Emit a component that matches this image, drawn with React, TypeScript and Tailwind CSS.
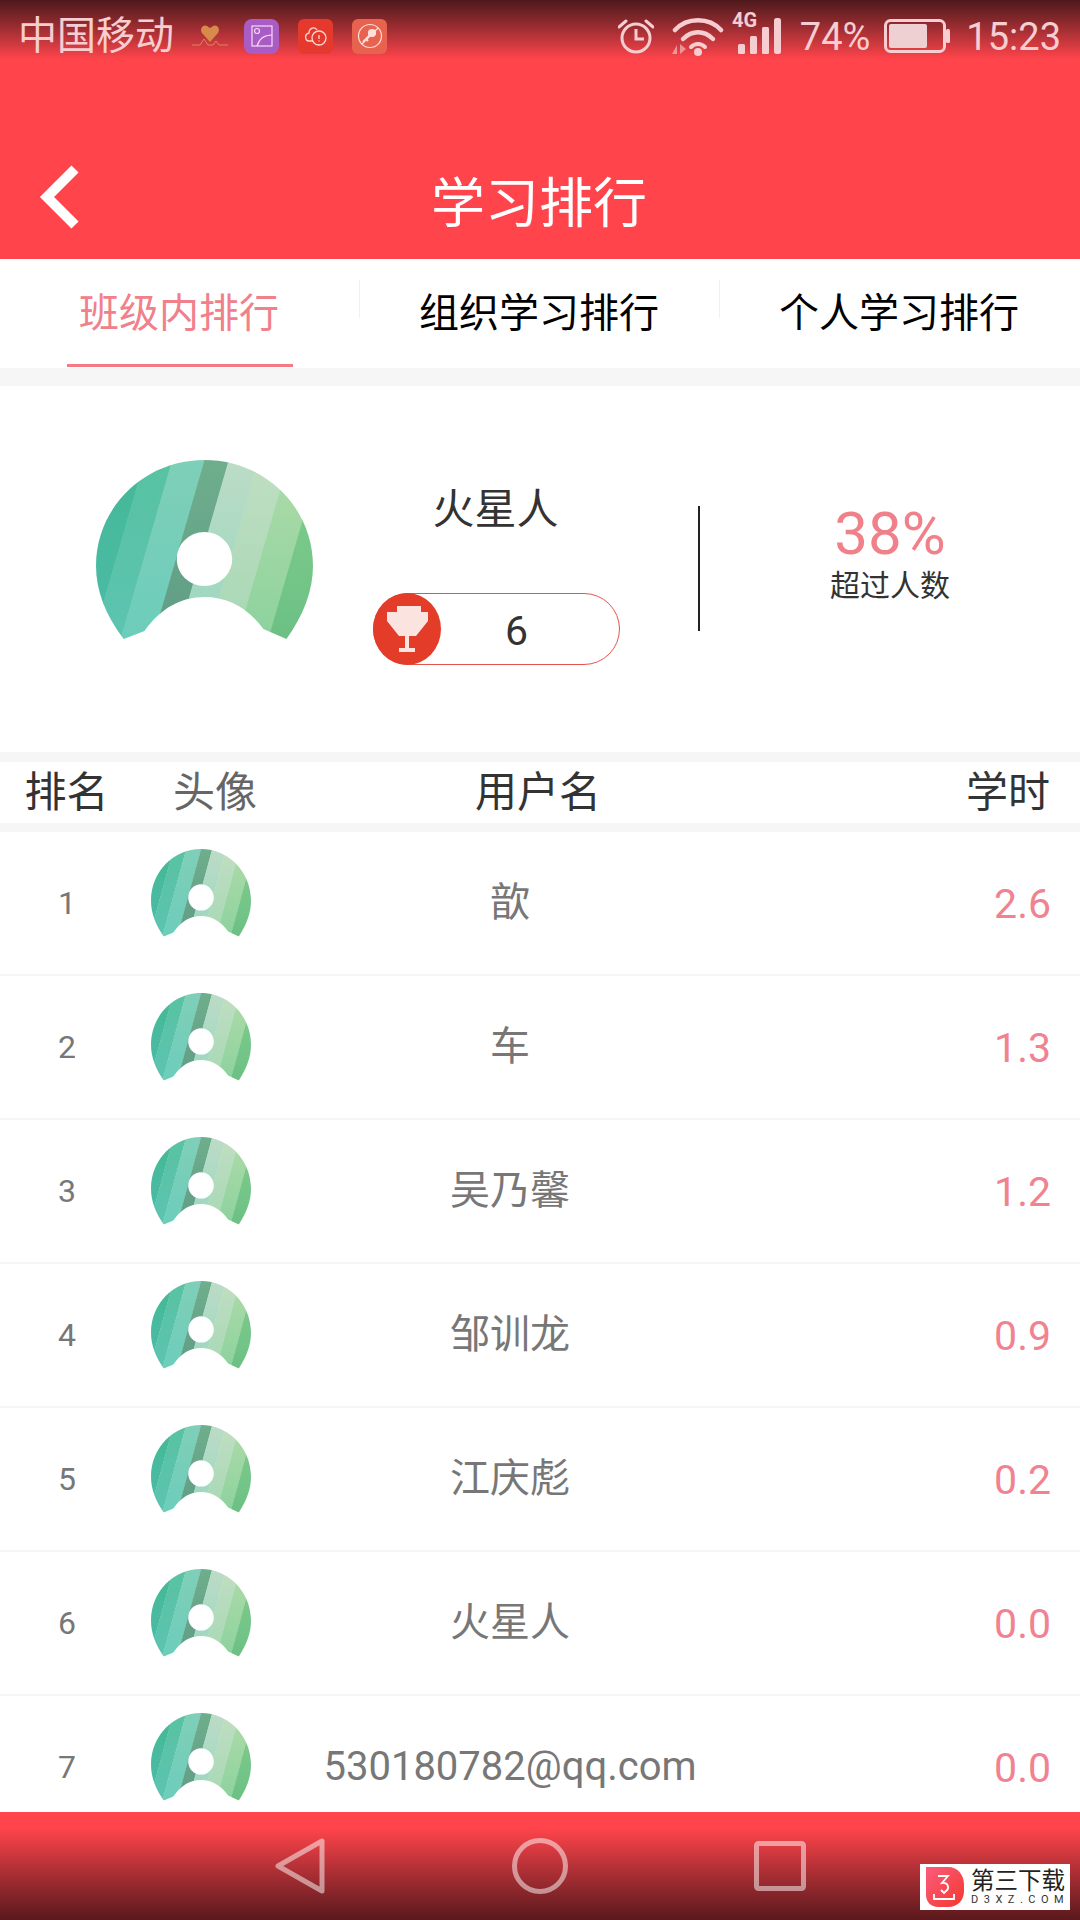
import { useId } from 'react'

const rows = [
  { rank: 1, name: '歆', hours: '2.6' },
  { rank: 2, name: '车', hours: '1.3' },
  { rank: 3, name: '吴乃馨', hours: '1.2' },
  { rank: 4, name: '邹训龙', hours: '0.9' },
  { rank: 5, name: '江庆彪', hours: '0.2' },
  { rank: 6, name: '火星人', hours: '0.0' },
  { rank: 7, name: '530180782@qq.com', hours: '0.0' },
]

const bands = [
  { from: -60, to: 42, top: '#45b896', bottom: '#4cbca8' },
  { from: 42, to: 66, top: '#58c2a2', bottom: '#5cc4b0' },
  { from: 66, to: 94, top: '#7fcfb8', bottom: '#6ccdbb' },
  { from: 94, to: 115, top: '#6fae8c', bottom: '#5f9c86' },
  { from: 115, to: 141, top: '#bcdcc6', bottom: '#98d6c0' },
  { from: 141, to: 167, top: '#c0dec2', bottom: '#a6d8b4' },
  { from: 167, to: 194, top: '#aedba8', bottom: '#8cd29e' },
  { from: 194, to: 300, top: '#82ce8e', bottom: '#6cc084' },
]

function Avatar({ className }: { className: string }) {
  const id = useId()
  return (
    <svg viewBox="0 0 188 180" preserveAspectRatio="none" className={className}>
      <defs>
        <clipPath id={id}>
          <path
            clipRule="evenodd"
            d="M24 179C8 155 0 130 0 106C0 47 42 0 94 0C146 0 188 47 188 106C188 130 180 155 165 179L145 169C132 148 114 137 94 137C74 137 56 148 42 171ZM94 72C81 72 70 84 70 99C70 114 81 126 94 126C107 126 118 114 118 99C118 84 107 72 94 72Z"
          />
        </clipPath>
        {bands.map((b, i) => (
          <linearGradient key={i} id={`${id}-${i}`} x1="0" y1="0" x2="0" y2="1">
            <stop offset="0" stopColor={b.top} />
            <stop offset="1" stopColor={b.bottom} />
          </linearGradient>
        ))}
      </defs>
      <g clipPath={`url(#${id})`}>
        {bands.map((b, i) => (
          <polygon
            key={i}
            fill={`url(#${id}-${i})`}
            points={`${b.from},0 ${b.to + 0.5},0 ${b.to + 0.5 - 45},180 ${b.from - 45},180`}
          />
        ))}
      </g>
    </svg>
  )
}

function StatusIcons() {
  return (
    <div className="ml-auto flex items-center text-[38px] leading-none text-[#f6cdd0]">
      <svg viewBox="0 0 36 38" className="h-[38px] w-[36px]" fill="none" stroke="currentColor" strokeWidth="3">
        <circle cx="18" cy="21" r="14" />
        <path d="M18 12V22H26" />
        <path d="M1 10L8 4M35 10L28 4" strokeLinecap="round" />
      </svg>
      <svg viewBox="0 0 52 40" className="ml-[18px] h-[40px] w-[52px]" fill="none" stroke="currentColor" strokeLinecap="round">
        <path d="M3 14C15 1 37 1 49 14" strokeWidth="4.5" />
        <path d="M11 23C20 14 32 14 41 23" strokeWidth="4.5" />
        <path d="M19 31C23 27 29 27 33 31" strokeWidth="4" />
        <circle cx="26" cy="36" r="4" fill="currentColor" stroke="none" />
        <path d="M0 38L5 29V38ZM8 28L14 33L8 38Z" fill="currentColor" fillOpacity="0.6" stroke="none" />
      </svg>
      <svg viewBox="0 0 50 44" className="ml-[8px] h-[44px] w-[50px] overflow-visible" fill="currentColor">
        <text x="0" y="13" fontSize="20" fontWeight="700" fontFamily="Roboto, sans-serif">4G</text>
        <rect x="6" y="30" width="7" height="10" rx="1.5" />
        <rect x="18" y="22" width="7" height="18" rx="1.5" />
        <rect x="30" y="13" width="7" height="27" rx="1.5" />
        <rect x="42" y="4" width="7" height="36" rx="2.5" />
      </svg>
      <span className="ml-[18px] mt-[2px]">74%</span>
      <svg viewBox="0 0 66 34" className="ml-[14px] h-[34px] w-[66px]">
        <rect x="1.5" y="1.5" width="59" height="31" rx="5" fill="none" stroke="currentColor" strokeWidth="3" />
        <rect x="5" y="5" width="38" height="24" rx="2" fill="#eecfd2" />
        <rect x="62" y="10" width="4" height="14" rx="1.5" fill="currentColor" />
      </svg>
      <span className="ml-[16px] mr-[19px] mt-[2px]">15:23</span>
    </div>
  )
}

function StatusBar() {
  return (
    <div className="flex h-[72px] items-center bg-linear-to-b from-[#4e191c] to-[#ff444b] to-[82%]">
      <span className="ml-[18px] text-[39px] leading-none text-[#f6cdd0]">中国移动</span>
      <svg viewBox="0 0 36 24" className="ml-[18px] h-[24px] w-[36px]" fill="none">
        <path d="M0 21H8L12 15L16 21H21L24 17L27 21H36" stroke="#d99a6a" strokeWidth="0.8" />
        <path d="M18 18L10 9C7 4 12 0 15 2C16.500 3 18 4 18 4C18 4 20 3 21 2C24 0 29 4 26 9Z" fill="#d88a4c" />
      </svg>
      <div className="ml-[16px] flex h-[35px] w-[35px] items-center justify-center rounded-[8px] bg-[#a85cc4]">
        <svg viewBox="0 0 22 22" className="h-[22px] w-[22px]" fill="none" stroke="#f9d9fb" strokeWidth="1.200">
          <rect x="1" y="1" width="20" height="20" />
          <circle cx="6" cy="6" r="2.500" />
          <path d="M6 21C8 14 13 10 21 10" />
        </svg>
      </div>
      <div className="ml-[19px] flex h-[35px] w-[35px] items-center justify-center rounded-[6px] bg-[#e6392d]">
        <svg viewBox="0 0 24 22" className="h-[22px] w-[24px]" fill="none" stroke="#fbd7d2" strokeWidth="1.300">
          <path d="M9 16H5C1 16 0 9 5 8C5 3 11 1 13 5" />
          <circle cx="15" cy="13" r="7" />
          <path d="M15 10V14M15 15.500V16.500" />
        </svg>
      </div>
      <div className="ml-[19px] flex h-[35px] w-[35px] items-center justify-center rounded-[6px] bg-[#e8634f]">
        <svg viewBox="0 0 26 26" className="h-[26px] w-[26px]" fill="none" stroke="#fde0da" strokeWidth="1.200">
          <circle cx="13" cy="13" r="11.500" />
          <circle cx="15" cy="10" r="3.500" fill="#fde0da" />
          <path d="M13 12L6 19M9 16L11 18" strokeWidth="2" />
          <path d="M21 5L5 21" />
        </svg>
      </div>
      <StatusIcons />
    </div>
  )
}

function Tabs() {
  const tabs = ['班级内排行', '组织学习排行', '个人学习排行']
  return (
    <div className="flex h-[109px] items-center bg-white">
      {tabs.map((tab, i) => (
        <div key={tab} className="relative flex h-full flex-1 items-center justify-center pr-[2px]">
          <span className={`text-[40px] leading-none ${i === 0 ? 'text-[#f0808a]' : 'text-black'}`}>{tab}</span>
          {i === 0 && <div className="absolute bottom-px left-[67px] h-[3px] w-[226px] bg-[#f57a84]" />}
          {i < 2 && <div className="absolute right-0 top-[21px] h-[38px] w-px bg-[#f0f0f0]" />}
        </div>
      ))}
    </div>
  )
}

function Profile() {
  return (
    <section className="flex h-[366px] items-start bg-white">
      <Avatar className="ml-[96px] mt-[74px] h-[180px] w-[217px]" />
      <div className="ml-[60px] mt-[96px] flex w-[247px] flex-col items-center">
        <span className="pr-[2px] text-[42px] leading-[56px] text-[#333]">火星人</span>
        <div className="mt-[55px] flex h-[72px] w-full items-center rounded-full border-[1.5px] border-[#e2554c]">
          <svg viewBox="0 0 68 72" className="-ml-px h-[72px] w-[68px] shrink-0">
            <ellipse cx="34" cy="36" rx="34" ry="36" fill="#e33c29" />
            <path d="M24 13H48V19H55V28L43 43H36V55H42V59H26V55H32V43H26L14 28V19H24Z" fill="#fbe4df" />
          </svg>
          <span className="ml-[64px] mt-[4px] text-[41px] leading-none text-[#333]">6</span>
        </div>
      </div>
      <div className="ml-[78px] mt-[120px] h-[125px] w-[2px] bg-[#222]" />
      <div className="mt-[116px] flex flex-1 flex-col items-center">
        <span className="text-[60px] leading-[64px] text-[#f0808a]">38%</span>
        <span className="text-[30px] leading-[40px] text-[#333]">超过人数</span>
      </div>
    </section>
  )
}

function RankRow({ rank, name, hours }: { rank: number; name: string; hours: string }) {
  return (
    <div className="flex h-[144px] shrink-0 items-center border-b-2 border-[#f6f6f6] bg-white">
      <span className="w-[132px] pl-[2px] text-center text-[32px] text-[#777]">{rank}</span>
      <Avatar className="mb-[20px] ml-[19px] h-[88px] w-[100px]" />
      <span className="w-[518px] text-center text-[40px] text-[#777]">{name}</span>
      <span className="flex-1 pr-[29px] pt-[4px] text-right text-[41px] text-[#f0838f]">{hours}</span>
    </div>
  )
}

function NavBar() {
  return (
    <div className="flex h-[108px] shrink-0 items-start bg-linear-to-b from-[#ff444b] from-[15%] to-[#5a191d]">
      <svg viewBox="0 0 50 56" className="ml-[275px] mt-[26px] h-[56px] w-[50px]" fill="none" stroke="white" strokeOpacity="0.5" strokeWidth="5" strokeLinejoin="round">
        <path d="M47 3V53L3 28Z" />
      </svg>
      <svg viewBox="0 0 56 56" className="ml-[187px] mt-[26px] h-[56px] w-[56px]" fill="none" stroke="white" strokeOpacity="0.5" strokeWidth="5">
        <circle cx="28" cy="28" r="25.500" />
      </svg>
      <svg viewBox="0 0 52 50" className="ml-[186px] mt-[29px] h-[50px] w-[52px]" fill="none" stroke="white" strokeOpacity="0.5" strokeWidth="5" strokeLinejoin="round">
        <rect x="2.500" y="2.500" width="47" height="45" rx="2" />
      </svg>
    </div>
  )
}

export default function App() {
  return (
    <div className="relative flex h-[1920px] w-[1080px] flex-col overflow-hidden bg-white font-[Roboto,'Noto_Sans_CJK_SC',sans-serif]">
      <header className="h-[259px] shrink-0 bg-[#ff444b]">
        <StatusBar />
        <div className="flex h-[187px] items-center pt-[78px]">
          <svg viewBox="0 0 44 64" className="mb-[16px] ml-[37px] h-[64px] w-[44px]" fill="none" stroke="white" strokeWidth="10">
            <path d="M38 4L10 32L38 60" />
          </svg>
          <h1 className="ml-[350px] text-[54px] font-normal leading-none text-white">学习排行</h1>
        </div>
      </header>
      <Tabs />
      <div className="h-[18px] shrink-0 bg-[#f6f6f6]" />
      <Profile />
      <div className="h-[10px] shrink-0 bg-[#f6f6f6]" />
      <div className="flex h-[61px] shrink-0 items-center bg-white text-[42px] leading-none text-[#333]">
        <span className="w-[132px] pl-[1px] text-center">排名</span>
        <span className="w-[166px] text-center text-[#666]">头像</span>
        <span className="w-[480px] text-center">用户名</span>
        <span className="flex-1 pr-[30px] text-right">学时</span>
      </div>
      <div className="h-[9px] shrink-0 bg-[#f6f6f6]" />
      <div className="flex min-h-0 flex-1 flex-col overflow-hidden">
        {rows.map((row) => (
          <RankRow key={row.rank} {...row} />
        ))}
      </div>
      <NavBar />
      <div className="absolute left-[920px] top-[1864px] flex h-[46px] w-[150px] items-center bg-white">
        <svg viewBox="0 0 38 40" className="ml-[6px] h-[40px] w-[38px] shrink-0">
          <defs>
            <linearGradient id="mark" x1="0" y1="0" x2="1" y2="1">
              <stop offset="0" stopColor="#fb5c7c" />
              <stop offset="1" stopColor="#f4382e" />
            </linearGradient>
          </defs>
          <path d="M0 0H22C32 0 38 8 38 18V24C38 33 32 40 22 40H12C5 40 0 35 0 28Z" fill="url(#mark)" />
          <path d="M12 9H22L16 16C22 15 24 21 20 24L18 26L15 23M8 27V32H28V27" fill="none" stroke="white" strokeWidth="1.800" />
        </svg>
        <div className="ml-[7px] flex flex-col">
          <span className="text-[23.500px] leading-[26px] text-[#222]">第三下载</span>
          <span className="text-[11px] leading-[12px] tracking-[5.500px] text-[#333]">D3XZ.COM</span>
        </div>
      </div>
    </div>
  )
}
